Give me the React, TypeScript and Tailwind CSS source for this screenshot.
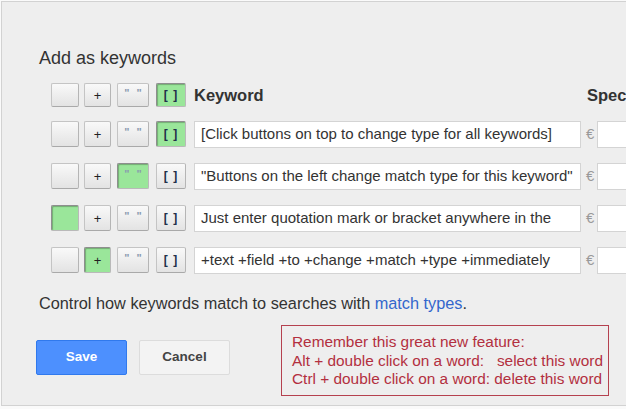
import React from "react";

const font = { fontFamily: '"Liberation Sans", Arial, sans-serif' };

type BtnProps = { w: string; on?: boolean; h: string; children?: React.ReactNode };

function MatchButton({ w, on, h, children }: BtnProps) {
  const base = "flex items-center justify-center rounded-[2px] border text-[11px] font-bold leading-none";
  const look = on
    ? "bg-[#9ae69a] border-[#8e8e8e] border-b-[#b9b9b9] border-r-[#b9b9b9] shadow-[inset_1px_1px_1px_rgba(0,0,0,0.25)]"
    : "bg-gradient-to-b from-[#f9f9f9] to-[#e3e3e3] border-[#c4c4c4] border-b-[#a9a9a9] border-r-[#b5b5b5]";
  return <div className={`${base} ${look} ${w} ${h} shrink-0`}>{children}</div>;
}

function ButtonSet({ active, h }: { active: number; h: string }) {
  return (
    <div className="flex items-center">
      <MatchButton w="w-[28px]" h={h} on={active === 0} />
      <div className="ml-[5px]">
        <MatchButton w="w-[27px]" h={h} on={active === 1}>
          <span className="text-[13px] font-normal text-[#222]">+</span>
        </MatchButton>
      </div>
      <div className="ml-[6px]">
        <MatchButton w="w-[32px]" h={h} on={active === 2}>
          <span className="text-[11px] text-[#8a9bb0] tracking-[2px] pl-[2px] -mt-[3px]">" "</span>
        </MatchButton>
      </div>
      <div className="ml-[7px]">
        <MatchButton w="w-[30px]" h={h} on={active === 3}>
          <span className="text-[12px] text-[#22304a] tracking-[1px]">[ ]</span>
        </MatchButton>
      </div>
    </div>
  );
}

const rows = [
  { active: 3, text: "[Click buttons on top to change type for all keywords]" },
  { active: 2, text: "\"Buttons on the left change match type for this keyword\"" },
  { active: 0, text: "Just enter quotation mark or bracket anywhere in the" },
  { active: 1, text: "+text +field +to +change +match +type +immediately" },
];

export default function App() {
  return (
    <div className="w-[626px] h-[409px] bg-[#fafafa] overflow-hidden" style={font}>
      <div className="ml-[1px] mt-[1px] w-[700px] h-[405px] border border-[#d2d2d2] bg-[#eeeeee] pl-[34px] pt-[44px]">
        <div className="ml-[3px] mt-[2px] text-[18px] leading-[20px] text-[#333]">Add as keywords</div>

        <div className="ml-[15px] mt-[15px] flex items-center h-[24px]">
          <ButtonSet active={3} h="h-[24px]" />
          <div className="ml-[8px] w-[393px] text-[16.5px] font-bold text-[#333]">Keyword</div>
          <div className="text-[16.5px] font-bold text-[#333]">Spec</div>
        </div>

        <div className="ml-[15px] mt-[13px] flex flex-col gap-[14px]">
          {rows.map((r, i) => (
            <div key={i} className="flex items-center h-[28px]">
              <ButtonSet active={r.active} h="h-[26px]" />
              <div className="ml-[8px] w-[387px] h-[27px] bg-white border border-[#d4d4d4] flex items-center pl-[6px] text-[15px] text-[#333] whitespace-nowrap overflow-hidden">
                {r.text}
              </div>
              <div className="ml-[5px] w-[11px] text-[15px] text-[#999]">€</div>
              <div className="w-[60px] h-[27px] bg-white border border-[#d4d4d4]" />
            </div>
          ))}
        </div>

        <div className="ml-[3px] mt-[20px] text-[16.3px] leading-[18px] text-[#333]">
          Control how keywords match to searches with <span className="text-[#3366cc]">match types</span>.
        </div>

        <div className="mt-[13px] flex items-start">
          <div className="mt-[15px] w-[91px] h-[35px] rounded-[2px] bg-[#4d90fe] border border-[#3079ed] flex items-center justify-center text-[13.5px] font-bold text-white">
            Save
          </div>
          <div className="mt-[15px] ml-[12px] w-[91px] h-[35px] rounded-[2px] bg-[#f3f3f3] border border-[#dcdcdc] flex items-center justify-center text-[13.5px] font-bold text-[#444]">
            Cancel
          </div>
          <div className="ml-[51px] w-[328px] h-[71px] border border-[#b5414f] pl-[10px] pt-[7px] text-[15.4px] leading-[18.5px] text-[#b3303f] whitespace-pre">
            <div>Remember this great new feature:</div>
            <div>Alt + double click on a word:   select this word</div>
            <div>Ctrl + double click on a word: delete this word</div>
          </div>
        </div>
      </div>
    </div>
  );
}
